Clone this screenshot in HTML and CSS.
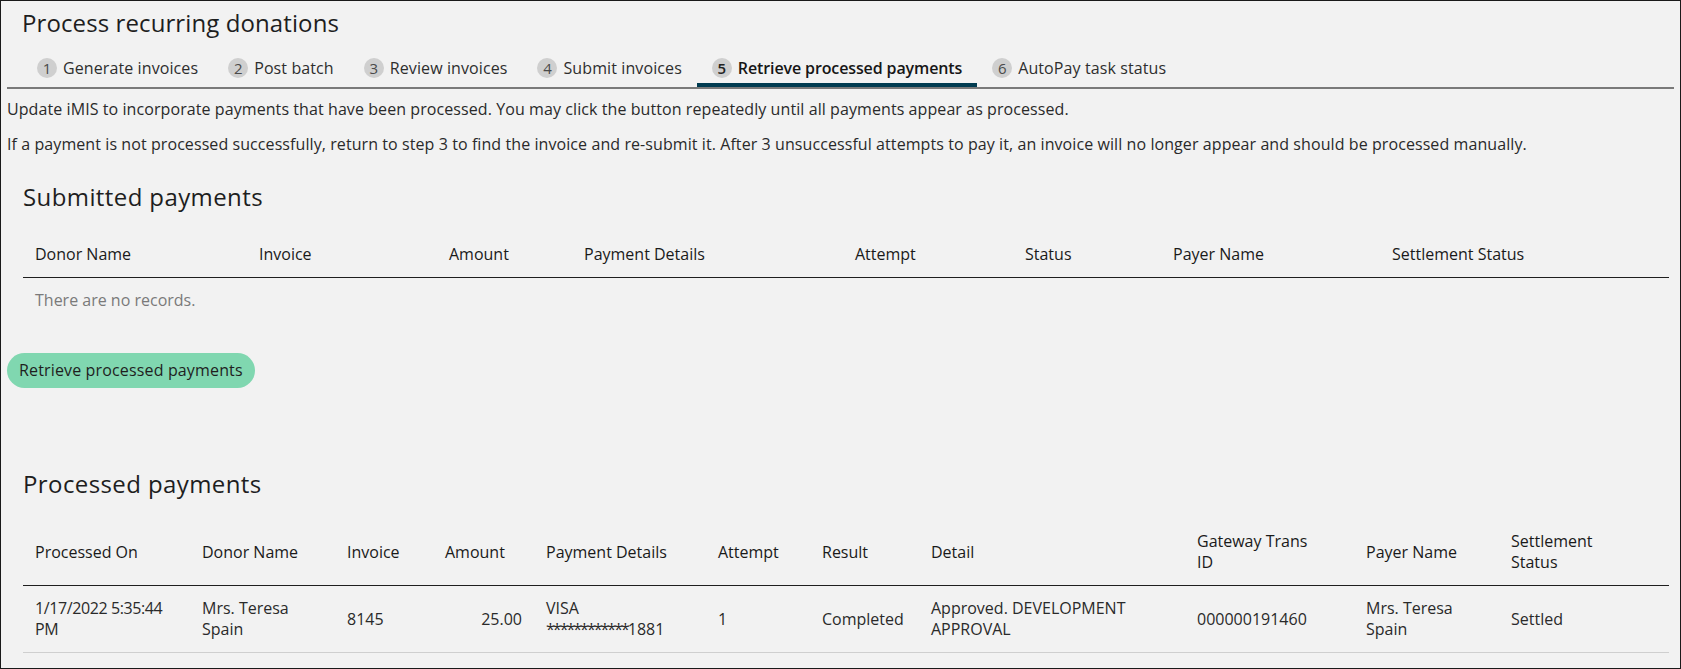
FILE: index.html
```html
<!DOCTYPE html>
<html lang="en">
<head>
<meta charset="utf-8">
<title>Process recurring donations</title>
<link rel="stylesheet" href="styles.css">
</head>
<body>
<div class="page">
  <h1 class="page-title">Process recurring donations</h1>

  <nav class="steps">
    <a class="step"><span class="step-num">1</span>Generate invoices</a>
    <a class="step"><span class="step-num">2</span>Post batch</a>
    <a class="step"><span class="step-num">3</span>Review invoices</a>
    <a class="step"><span class="step-num">4</span>Submit invoices</a>
    <a class="step is-active"><span class="step-num">5</span>Retrieve processed payments</a>
    <a class="step"><span class="step-num">6</span>AutoPay task status</a>
  </nav>

  <p class="intro">Update iMIS to incorporate payments that have been processed. You may click the button repeatedly until all payments appear as processed.</p>
  <p class="intro">If a payment is not processed successfully, return to step 3 to find the invoice and re-submit it. After 3 unsuccessful attempts to pay it, an invoice will no longer appear and should be processed manually.</p>

  <section class="panel panel-submitted">
    <h2 class="panel-title">Submitted payments</h2>
    <table class="grid">
      <colgroup>
        <col style="width:224px"><col style="width:190px"><col style="width:135px"><col style="width:271px">
        <col style="width:170px"><col style="width:148px"><col style="width:219px"><col style="width:289px">
      </colgroup>
      <thead>
        <tr>
          <th>Donor Name</th><th>Invoice</th><th>Amount</th><th>Payment Details</th>
          <th>Attempt</th><th>Status</th><th>Payer Name</th><th>Settlement Status</th>
        </tr>
      </thead>
      <tbody>
        <tr class="empty-row"><td colspan="8">There are no records.</td></tr>
      </tbody>
    </table>
  </section>

  <button class="btn-retrieve" type="button">Retrieve processed payments</button>

  <section class="panel panel-processed">
    <h2 class="panel-title">Processed payments</h2>
    <table class="grid">
      <colgroup>
        <col style="width:167px"><col style="width:145px"><col style="width:98px"><col style="width:101px">
        <col style="width:172px"><col style="width:104px"><col style="width:109px"><col style="width:266px">
        <col style="width:169px"><col style="width:145px"><col style="width:170px">
      </colgroup>
      <thead>
        <tr>
          <th>Processed On</th><th>Donor Name</th><th>Invoice</th><th>Amount</th>
          <th>Payment Details</th><th>Attempt</th><th>Result</th><th>Detail</th>
          <th class="th-narrow">Gateway Trans ID</th><th>Payer Name</th><th class="th-narrow">Settlement Status</th>
        </tr>
      </thead>
      <tbody>
        <tr>
          <td class="td-date">1/17/2022 5:35:44 PM</td>
          <td>Mrs. Teresa Spain</td>
          <td>8145</td>
          <td class="num">25.00</td>
          <td>VISA <span class="mask">************</span>1881</td>
          <td>1</td>
          <td>Completed</td>
          <td>Approved. DEVELOPMENT APPROVAL</td>
          <td>000000191460</td>
          <td>Mrs. Teresa Spain</td>
          <td>Settled</td>
        </tr>
      </tbody>
    </table>
  </section>
</div>
</body>
</html>
```

FILE: styles.css
```css
* {
  box-sizing: border-box;
}

html,
body {
  margin: 0;
  padding: 0;
}

body {
  font-family: "Open Sans", "Liberation Sans", sans-serif;
  color: #222;
  background: #f2f2f2;
}

.page {
  width: 1681px;
  height: 669px;
  overflow: hidden;
  border: 1px solid #1a1a1a;
  background: #f2f2f2;
  padding: 6px 6px 0 6px;
}

/* Page heading */
.page-title {
  margin: 0 0 0 15px;
  font-size: 24px;
  line-height: 32px;
  font-weight: 400;
  letter-spacing: 0.1px;
  color: #1e1e1e;
}

/* Wizard steps */
.steps {
  display: flex;
  margin-top: 9px;
  padding-left: 15px;
  border-bottom: 2px solid #7a7a7a;
}

.step {
  display: flex;
  align-items: center;
  gap: 6px;
  padding: 8px 15px 3px 15px;
  border-bottom: 4px solid transparent;
  font-size: 16px;
  line-height: 24px;
  letter-spacing: 0.1px;
  color: #2e2e2e;
  text-decoration: none;
  white-space: nowrap;
}

.step-num {
  display: inline-flex;
  align-items: center;
  justify-content: center;
  width: 20px;
  height: 20px;
  border-radius: 50%;
  background: #cfcfcf;
  color: #4a4a4a;
  font-size: 15px;
  line-height: 20px;
  letter-spacing: 0;
}

.step.is-active {
  border-bottom-color: #003b50;
  font-weight: 600;
  letter-spacing: -0.12px;
  color: #161616;
}

.step.is-active .step-num {
  color: #222;
}

/* Intro text */
.intro {
  margin: 0;
  font-size: 16px;
  line-height: 21px;
  letter-spacing: 0.08px;
  color: #2a2a2a;
}

.steps + .intro {
  margin-top: 10px;
}

.intro + .intro {
  margin-top: 14px;
}

/* Panels with tables */
.panel {
  padding: 0 5px 0 16px;
}

.panel-submitted {
  margin-top: 26px;
}

.panel-processed {
  margin-top: 80px;
}

.panel-title {
  margin: 0 0 20px 0;
  font-size: 24px;
  line-height: 31px;
  font-weight: 400;
  letter-spacing: 0.4px;
  color: #1e1e1e;
}

.grid {
  width: 100%;
  table-layout: fixed;
  border-collapse: collapse;
  font-size: 16px;
  line-height: 21px;
}

.grid th {
  padding: 12px;
  text-align: left;
  font-weight: 400;
  color: #1a1a1a;
  vertical-align: middle;
  border-bottom: 1px solid #1f1f1f;
}

/* headers that break onto two lines in the narrow columns */
.grid th.th-narrow {
  padding-right: 40px;
}

.grid td {
  padding: 12px;
  color: #2a2a2a;
  vertical-align: middle;
  border-bottom: 1px solid #cfcfcf;
}

.grid td.td-date {
  padding-right: 4px;
  letter-spacing: -0.4px;
}

.grid td.num {
  text-align: right;
}

.grid .mask {
  letter-spacing: -2px;
}

.grid .empty-row td {
  color: #7a7a7a;
  border-bottom: none;
}

/* Action button */
.btn-retrieve {
  display: block;
  margin-top: 30px;
  padding: 7px 12px;
  border: none;
  border-radius: 18px;
  background: #80d7b0;
  color: #1f1f1f;
  font-family: inherit;
  font-size: 16px;
  line-height: 21px;
  letter-spacing: 0.15px;
  cursor: pointer;
}
```
